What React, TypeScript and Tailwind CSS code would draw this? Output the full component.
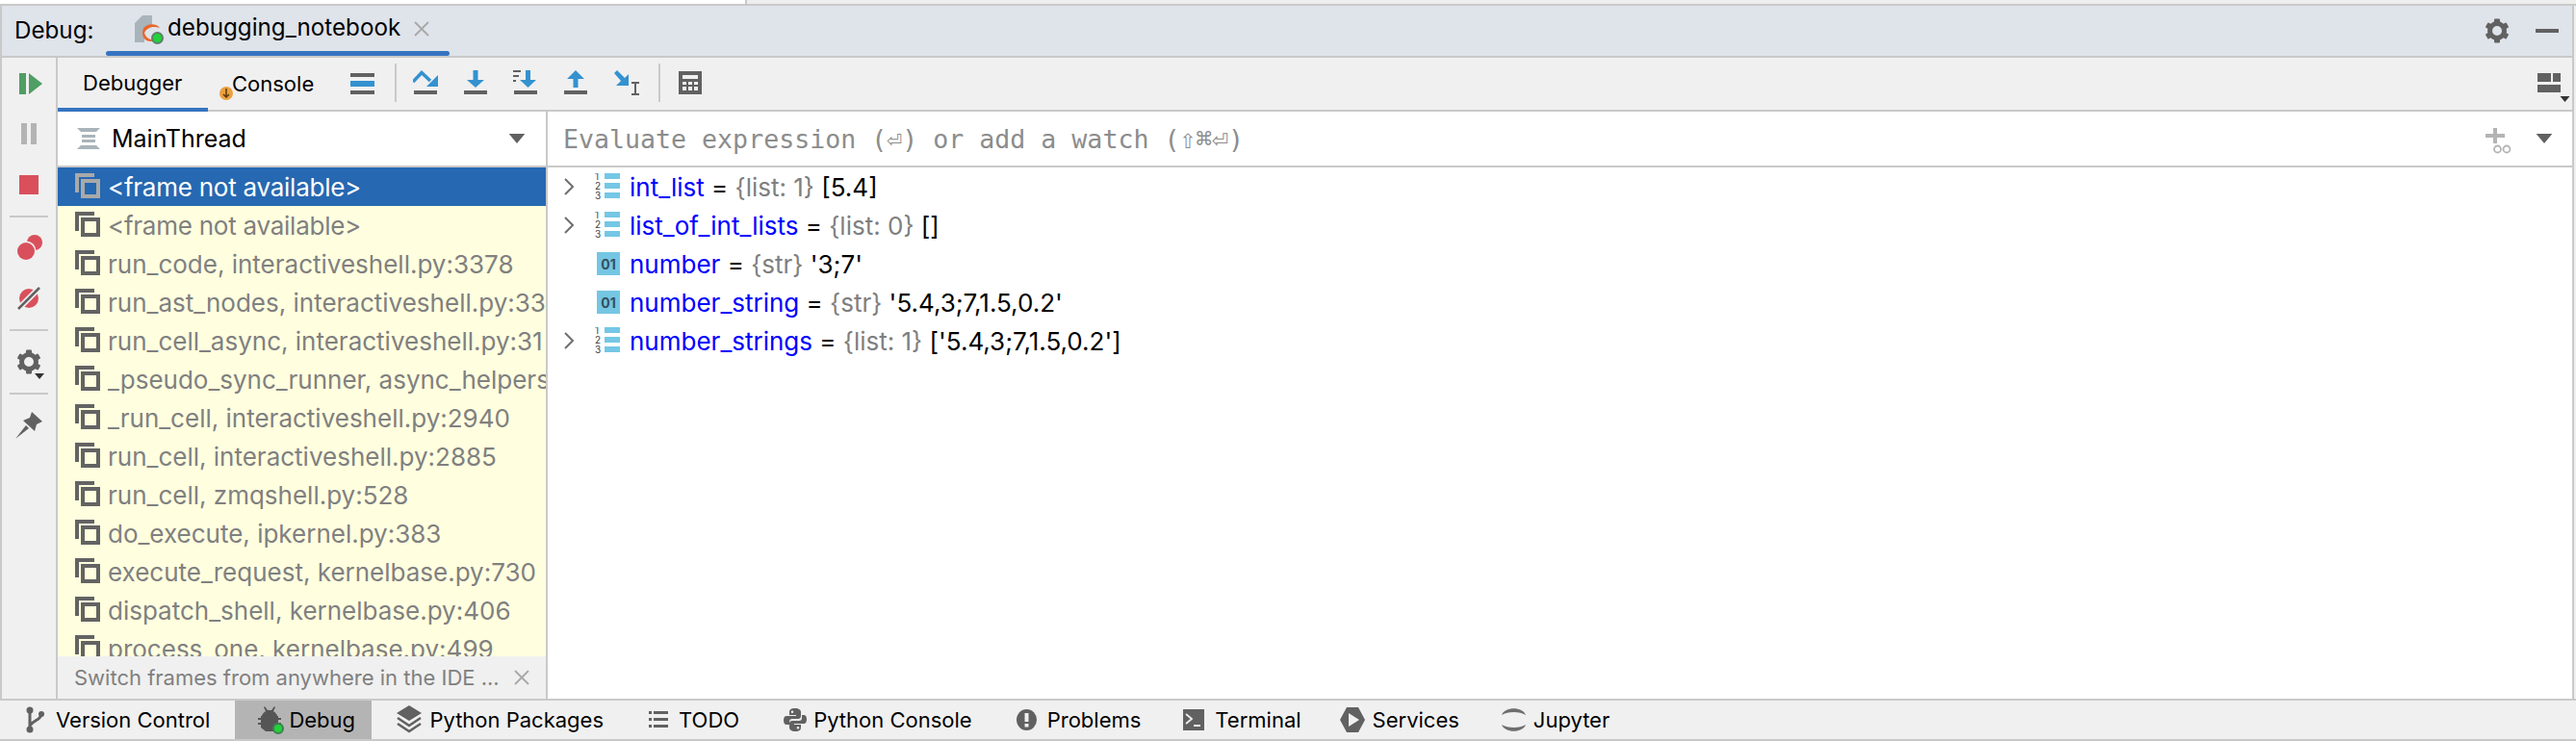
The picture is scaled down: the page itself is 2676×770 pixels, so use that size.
import type { ReactNode } from 'react';

const BLUE = '#3492d0';
const GRAY = '#616161';

function Gear({ size = 26 }: { size?: number }) {
  return (
    <svg width={size} height={size} viewBox="0 0 26 26">
      <circle cx="13" cy="13" r="7.5" fill="none" stroke={GRAY} strokeWidth="5" />
      {[0, 60, 120, 180, 240, 300].map((a) => (
        <rect key={a} x="10" y="0.5" width="6" height="6" rx="1" fill={GRAY} transform={`rotate(${a} 13 13)`} />
      ))}
    </svg>
  );
}

function Tri({ w, h, color = GRAY }: { w: number; h: number; color?: string }) {
  return (
    <svg width={w} height={h} viewBox="0 0 10 6">
      <path d="M0 0H10L5 6Z" fill={color} />
    </svg>
  );
}

function Close({ size, color }: { size: number; color: string }) {
  return (
    <svg width={size} height={size} viewBox="0 0 16 16">
      <path d="M1 1L15 15M15 1L1 15" stroke={color} strokeWidth="1.8" fill="none" />
    </svg>
  );
}

function FrameIcon({ selected }: { selected?: boolean }) {
  const c = selected ? '#a9a9a9' : '#636363';
  return (
    <svg width="26" height="26" viewBox="0 0 26 26" className="shrink-0">
      <path d="M0 0H20V4H4V20H0Z" fill={c} />
      <path d="M6 6H26V26H6ZM10 10V22H22V10Z" fill={c} fillRule="evenodd" />
    </svg>
  );
}

function ListIcon() {
  return (
    <svg width="26" height="28" viewBox="0 0 26 28" className="shrink-0">
      {[0, 10, 20].map((y, i) => (
        <g key={y}>
          <text x="0" y={y + 7} fontSize="10" fontFamily="Inter, sans-serif" fill="#444">{i + 1}</text>
          <rect x="10" y={y} width="16" height="6" fill="#74c7e5" />
        </g>
      ))}
    </svg>
  );
}

function StepBase({ children }: { children: ReactNode }) {
  return (
    <svg width="26" height="26" viewBox="0 0 26 26" className="shrink-0">
      {children}
      <rect x="1" y="21" width="24" height="4" fill={GRAY} />
    </svg>
  );
}

const frames = [
  '<frame not available>',
  '<frame not available>',
  'run_code, interactiveshell.py:3378',
  'run_ast_nodes, interactiveshell.py:33',
  'run_cell_async, interactiveshell.py:31',
  '_pseudo_sync_runner, async_helpers',
  '_run_cell, interactiveshell.py:2940',
  'run_cell, interactiveshell.py:2885',
  'run_cell, zmqshell.py:528',
  'do_execute, ipkernel.py:383',
  'execute_request, kernelbase.py:730',
  'dispatch_shell, kernelbase.py:406',
  'process_one, kernelbase.py:499',
];

const vars = [
  { name: 'int_list', type: '{list: 1}', value: '[5.4]', list: true },
  { name: 'list_of_int_lists', type: '{list: 0}', value: '[]', list: true },
  { name: 'number', type: '{str}', value: "'3;7'", list: false },
  { name: 'number_string', type: '{str}', value: "'5.4,3;7,1.5,0.2'", list: false },
  { name: 'number_strings', type: '{list: 1}', value: "['5.4,3;7,1.5,0.2']", list: true },
];

function SideSep() {
  return <div className="w-[40px] h-[2px] bg-[#c9c9c9] shrink-0" />;
}

function SideBar() {
  return (
    <div className="w-[58px] shrink-0 flex flex-col items-center border-r-2 border-[#c9c9c9] pt-[16px]">
      <svg width="24" height="22" viewBox="0 0 24 22" className="ml-[4px]">
        <rect width="7" height="22" fill="#4f9e63" />
        <path d="M10 0L24 11L10 22Z" fill="#4f9e63" />
      </svg>
      <svg width="16" height="22" viewBox="0 0 16 22" className="mt-[30px]">
        <rect width="6" height="22" fill="#b4b4b4" />
        <rect x="10" width="6" height="22" fill="#b4b4b4" />
      </svg>
      <div className="w-[20px] h-[20px] bg-[#d9505c] mt-[32px]" />
      <div className="mt-[22px]"><SideSep /></div>
      <svg width="26" height="26" viewBox="0 0 26 26" className="mt-[18px] ml-[2px]">
        <circle cx="18" cy="8" r="8" fill="#d9505c" />
        <circle cx="9" cy="17" r="10.500" fill="#f0f0f0" />
        <circle cx="9" cy="17" r="9" fill="#d9505c" />
      </svg>
      <svg width="26" height="26" viewBox="0 0 26 26" className="mt-[27px]">
        <circle cx="13" cy="13" r="10" fill="#d9505c" />
        <path d="M24 2L2 24" stroke="#f0f0f0" strokeWidth="6" />
        <path d="M24 2L2 24" stroke={GRAY} strokeWidth="2.500" />
      </svg>
      <div className="mt-[19px]"><SideSep /></div>
      <div className="relative mt-[19px] w-[26px] h-[28px]">
        <Gear />
        <div className="absolute left-[18px] top-[25px]"><Tri w={12} h={6} color="#333" /></div>
      </div>
      <div className="mt-[17px]"><SideSep /></div>
      <svg width="28" height="28" viewBox="0 0 28 28" className="mt-[18px]">
        <path d="M17 0L28 10L22 13L20 20L8 9L15 6Z" fill={GRAY} />
        <path d="M11 14L0 28L14 17Z" fill={GRAY} />
      </svg>
    </div>
  );
}

function Toolbar() {
  return (
    <div className="h-[56px] shrink-0 flex items-start border-b-2 border-[#c9c9c9] relative">
      <div className="w-[156px] h-[56px] border-b-4 border-[#3574c0] flex items-center pl-[26px] text-[22px] text-black shrink-0">Debugger</div>
      <div className="relative h-[54px] flex items-center ml-[25px] text-[22px] text-black shrink-0">
        Console
        <div className="absolute -left-[13px] top-[30px] w-[14px] h-[14px] rounded-full bg-[#eca03f] flex items-center justify-center">
          <svg width="10" height="12" viewBox="0 0 10 12"><path d="M5 1V10M2 7L5 10L8 7" stroke="#5b3a10" strokeWidth="1.500" fill="none" /></svg>
        </div>
      </div>
      <div className="ml-[38px] mt-[16px] flex flex-col gap-[4px] w-[25px] shrink-0">
        <div className="h-[4px] bg-[#616161]" />
        <div className="h-[6px] bg-[#3492d0]" />
        <div className="h-[4px] bg-[#616161]" />
      </div>
      <div className="ml-[21px] mt-[6px] w-[2px] h-[40px] bg-[#c9c9c9] shrink-0" />
      <div className="ml-[17px] mt-[13px] flex gap-[26px] items-start">
        <StepBase>
          <path d="M0 12L9 2.500L18 11" stroke={BLUE} strokeWidth="3.500" fill="none" />
          <path d="M26 5V17H14Z" fill={BLUE} />
        </StepBase>
        <StepBase>
          <path d="M10.500 0H15.500V10H22L13 18L4 10H10.500Z" fill={BLUE} />
        </StepBase>
        <StepBase>
          <path d="M13 0H18V10H24L15.500 18L7 10H13Z" fill={BLUE} />
          <path d="M0 0H8V2H0ZM0 5H6V7H0ZM0 10H3V12H0Z" fill={GRAY} />
        </StepBase>
        <StepBase>
          <path d="M10.500 18H15.500V9H22L13 0L4 9H10.500Z" fill={BLUE} />
        </StepBase>
        <svg width="28" height="28" viewBox="0 0 28 28" className="shrink-0">
          <path d="M1 3L4 0L12 8L16 4V16H3L8 11Z" fill={BLUE} />
          <path d="M19 13H27M19 25H27M23 13V25" stroke={GRAY} strokeWidth="2" fill="none" />
        </svg>
      </div>
      <div className="ml-[19px] mt-[6px] w-[2px] h-[40px] bg-[#c9c9c9] shrink-0" />
      <svg width="24" height="24" viewBox="0 0 24 24" className="ml-[19px] mt-[14px] shrink-0">
        <path fillRule="evenodd" fill={GRAY} d="M0 0H24V24H0ZM4 4V8H20V4ZM4 11V14H8V11ZM10 11V14H14V11ZM16 11V14H20V11ZM4 16V20H8V16ZM10 16V20H14V16ZM16 16V20H20V16Z" />
      </svg>
      <div className="ml-auto mt-[16px] relative w-[36px] h-[30px]">
        <svg width="24" height="20" viewBox="0 0 24 20">
          <path d="M0 0H14V9H0ZM16 0H24V9H16ZM0 12H24V20H0Z" fill={GRAY} />
        </svg>
        <div className="absolute left-[23px] top-[24px]"><Tri w={11} h={6} color="#333" /></div>
      </div>
    </div>
  );
}

function FramesPanel() {
  return (
    <div className="w-[509px] shrink-0 flex flex-col border-r-2 border-[#c9c9c9]">
      <div className="h-[56px] shrink-0 bg-white flex items-center pl-[20px] pr-[21px]">
        <svg width="24" height="22" viewBox="0 0 24 22" className="shrink-0">
          <path d="M0 0H24L20 4H4ZM5 7H19V10H5ZM5 12H19V15H5ZM4 18H20L24 22H0Z" fill="#a9b4ba" />
        </svg>
        <span className="ml-[12px] mt-[2px] text-[25px] text-black">MainThread</span>
        <div className="ml-auto"><Tri w={18} h={10} /></div>
      </div>
      <div className="h-[2px] bg-[#c9c9c9] shrink-0" />
      <div className="flex-1 min-h-0 overflow-hidden bg-[#ffffdf]">
        {frames.map((f, i) => (
          <div key={i} className={`h-[40px] flex items-center pl-[18px] gap-[8px] whitespace-nowrap text-[26px] ${i === 0 ? 'bg-[#2668b1] text-white' : 'text-[#808080]'}`}>
            <div className="-mt-[2px] flex"><FrameIcon selected={i === 0} /></div>
            <span className={i < 2 ? 'tracking-[-0.25px]' : ''}>{f}</span>
          </div>
        ))}
      </div>
      <div className="h-[44px] shrink-0 bg-[#f0f0f0] flex items-center pl-[17px] pr-[17px] text-[22px] text-[#808080] whitespace-nowrap">
        <span>Switch frames from anywhere in the IDE ...</span>
        <div className="ml-auto"><Close size={16} color="#a8a8a8" /></div>
      </div>
    </div>
  );
}

function WatchPanel() {
  return (
    <div className="flex-1 flex flex-col bg-white min-w-0">
      <div className="h-[56px] shrink-0 flex items-center pl-[16px] pr-[20px]">
        <span className="mt-[2px] font-['DejaVu_Sans_Mono',monospace] text-[26.600px] text-[#8c8c8c] whitespace-nowrap">
          Evaluate expression (⏎) or add a watch (<span className="text-[28px] leading-none">⇧⌘⏎</span>)
        </span>
        <svg width="28" height="28" viewBox="0 0 28 28" className="ml-auto shrink-0 mt-[6px]">
          <path d="M8 0H12V6H20V10H12V16H8V10H0V6H8Z" fill="#b4b4b4" />
          <circle cx="12.500" cy="22" r="3.500" fill="none" stroke="#b4b4b4" strokeWidth="1.800" />
          <circle cx="22" cy="22" r="3.500" fill="none" stroke="#b4b4b4" strokeWidth="1.800" />
        </svg>
        <div className="ml-[24px]"><Tri w={18} h={10} /></div>
      </div>
      <div className="h-[2px] bg-[#c9c9c9] shrink-0" />
      {vars.map((v) => (
        <div key={v.name} className="h-[40px] flex items-center whitespace-nowrap text-[26px] pl-[16px]">
          <div className="w-[33px] shrink-0">
            {v.list && (
              <svg width="12" height="18" viewBox="0 0 12 18"><path d="M2 1L10 9L2 17" stroke="#6e6e6e" strokeWidth="2" fill="none" /></svg>
            )}
          </div>
          <div className="w-[26px] h-[28px] flex items-center justify-end shrink-0">
            {v.list ? <ListIcon /> : (
              <div className="w-[24px] h-[24px] bg-[#74c6e3] flex items-center justify-center text-[14px] font-bold text-[#33505e]">01</div>
            )}
          </div>
          <span className="ml-[10px] text-[#0000ff]">{v.name}</span>
          <span className="text-black">&nbsp;=&nbsp;</span>
          <span className="text-[#7f7f7f]">{v.type}</span>
          <span className="text-black">&nbsp;{v.value}</span>
        </div>
      ))}
    </div>
  );
}

const statusItems: { label: string; cls: string; icon: ReactNode }[] = [
  {
    label: 'Version Control',
    cls: 'ml-[27px] gap-[12px]',
    icon: (
      <svg width="19" height="28" viewBox="0 0 19 28">
        <circle cx="4" cy="4" r="3.500" fill={GRAY} /><circle cx="4" cy="24" r="3.500" fill={GRAY} /><circle cx="16" cy="8" r="3" fill={GRAY} />
        <path d="M4 4V24M16 8C16 14 8 14 4 20" stroke={GRAY} strokeWidth="3" fill="none" />
      </svg>
    ),
  },
  {
    label: 'Debug',
    cls: 'ml-[26px] gap-[7px] w-[142px] pl-[24px] h-full bg-[#b4b4b4]',
    icon: (
      <div className="relative w-[25px] h-[28px]">
        <svg width="25" height="28" viewBox="0 0 25 28">
          <path d="M7 0L10 4H14L17 0L18 1L16 5C19 7 20 9 20 10H4C4 9 5 7 8 5L6 1Z" fill="#555" />
          <path d="M0 12H3V10H21V12H24V14H21V17H24V19H21V22L17 26H8L3 22V19H0V17H3V14H0Z" fill="#555" />
        </svg>
        <div className="absolute left-[15px] top-[17px] w-[12px] h-[12px] rounded-full bg-[#22d13c] border-2 border-[#3f7f4e]" />
      </div>
    ),
  },
  {
    label: 'Python Packages',
    cls: 'ml-[26px] gap-[8px]',
    icon: (
      <svg width="26" height="30" viewBox="0 0 26 30">
        <path d="M13 0L26 8L13 16L0 8Z" fill={GRAY} />
        <path d="M1 13L13 21L25 13M1 19L13 27L25 19" stroke={GRAY} strokeWidth="2.500" fill="none" />
      </svg>
    ),
  },
  {
    label: 'TODO',
    cls: 'ml-[47px] gap-[11px]',
    icon: (
      <svg width="20" height="20" viewBox="0 0 20 20">
        <path d="M0 1H3V4H0ZM5 1H20V4H5ZM0 8H3V11H0ZM5 8H20V11H5ZM0 15H3V18H0ZM5 15H20V18H5Z" fill={GRAY} />
      </svg>
    ),
  },
  {
    label: 'Python Console',
    cls: 'ml-[46px] gap-[7px]',
    icon: (
      <svg width="24" height="24" viewBox="0 0 24 24">
        <path d="M12 0C7 0 6 2 6 4V7H13V8H3C1 8 0 10 0 12.500C0 15 1 17 3 17H6V14C6 12 7 11 9 11H15C17 11 18 10 18 8V4C18 2 16 0 12 0ZM9 2.500A1.300 1.300 0 1 1 9 5.100A1.300 1.300 0 1 1 9 2.500Z" fill={GRAY} />
        <path d="M12 24C17 24 18 22 18 20V17H11V16H21C23 16 24 14 24 11.500C24 9 23 7 21 7H19V10C19 12 18 13 16 13H9C7 13 6 14 6 16V20C6 22 8 24 12 24ZM15 21.500A1.300 1.300 0 1 1 15 18.900A1.300 1.300 0 1 1 15 21.500Z" fill={GRAY} />
      </svg>
    ),
  },
  {
    label: 'Problems',
    cls: 'ml-[46px] gap-[11px]',
    icon: (
      <svg width="21" height="24" viewBox="0 0 21 24">
        <ellipse cx="10.500" cy="12" rx="10.500" ry="11" fill={GRAY} />
        <rect x="8.500" y="5" width="4" height="9" fill="#f0f0f0" />
        <rect x="8.500" y="16" width="4" height="3.500" fill="#f0f0f0" />
      </svg>
    ),
  },
  {
    label: 'Terminal',
    cls: 'ml-[44px] gap-[11px]',
    icon: (
      <svg width="22" height="22" viewBox="0 0 22 22">
        <rect width="22" height="22" fill={GRAY} />
        <path d="M3 5L9 10L3 15M11 17H18" stroke="#f0f0f0" strokeWidth="1.800" fill="none" />
      </svg>
    ),
  },
  {
    label: 'Services',
    cls: 'ml-[40px] gap-[8px]',
    icon: (
      <svg width="26" height="26" viewBox="0 0 26 26">
        <path d="M7 0H19L26 13L19 26H7L0 13Z" fill={GRAY} />
        <path d="M9 6L20 13L9 20Z" fill="#f0f0f0" />
      </svg>
    ),
  },
  {
    label: 'Jupyter',
    cls: 'ml-[43px] gap-[7px]',
    icon: (
      <svg width="27" height="28" viewBox="0 0 27 28">
        <path d="M1 9C4 0 23 0 26 9C20 5 7 5 1 9Z" fill="#6e6e6e" />
        <path d="M1 19C7 23 20 23 26 19C23 28 4 28 1 19Z" fill="#6e6e6e" />
      </svg>
    ),
  },
];

export default function App() {
  return (
    <div className="w-[2676px] h-[770px] flex flex-col overflow-hidden bg-[#f0f0f0] font-['Inter','Noto_Sans',sans-serif]">
      <div className="h-[6px] shrink-0 flex border-b-2 border-[#c9c9c9]">
        <div className="w-[774px] bg-white" />
        <div className="flex-1 border-l-2 border-[#c9c9c9] bg-[#eeeeee]" />
      </div>

      <div className="flex-1 min-h-0 flex flex-col border-x-2 border-[#c9c9c9] w-[2674px]">
        {/* title bar */}
        <div className="h-[54px] shrink-0 flex items-stretch bg-[#dfe3ea] border-b-2 border-[#c9c9c9]">
          <div className="pl-[13px] w-[108px] flex items-center text-[24.200px] text-black">Debug:</div>
          <div className="w-[357px] flex flex-col">
            <div className="flex-1 flex items-center pl-[30px] text-[24.200px] text-black">
              <div className="relative w-[28px] h-[28px] mr-[6px] shrink-0">
                <svg width="28" height="28" viewBox="0 0 28 28">
                  <path d="M8 0H18V12C13 12 10 15 10 20V28H0V8Z" fill="#a9b4ba" />
                  <path d="M8 18C8 8 22 7 26 13C20 11 13 12 10 18C12 25 18 26 22 25C17 29 8 27 8 18Z" fill="#e8672a" />
                </svg>
                <div className="absolute left-[17px] top-[17px] w-[13px] h-[13px] rounded-full bg-[#22d13c] border-2 border-[#5f7f68]" />
              </div>
              <span>debugging_notebook</span>
              <div className="ml-[14px]"><Close size={16} color="#a8a8a8" /></div>
            </div>
            <div className="h-[5px] rounded-full bg-[#3574c0]" />
          </div>
          <div className="ml-auto mr-[14px] flex items-center gap-[27px]">
            <Gear />
            <div className="w-[24px] h-[4px] bg-[#616161]" />
          </div>
        </div>

        <div className="flex-1 min-h-0 flex">
          <SideBar />
          <div className="flex-1 min-w-0 flex flex-col">
            <Toolbar />
            <div className="flex-1 min-h-0 flex">
              <FramesPanel />
              <WatchPanel />
            </div>
          </div>
        </div>
      </div>

      {/* tool window bar */}
      <div className="h-[44px] shrink-0 flex flex-col">
        <div className="h-[2px] bg-[#c9c9c9] shrink-0" />
        <div className="flex-1 flex items-center text-[22px] text-black whitespace-nowrap">
          {statusItems.map((s) => (
            <div key={s.label} className={`flex items-center ${s.cls}`}>
              {s.icon}
              <span>{s.label}</span>
            </div>
          ))}
        </div>
        <div className="h-[2px] bg-[#c9c9c9] shrink-0" />
      </div>
    </div>
  );
}
